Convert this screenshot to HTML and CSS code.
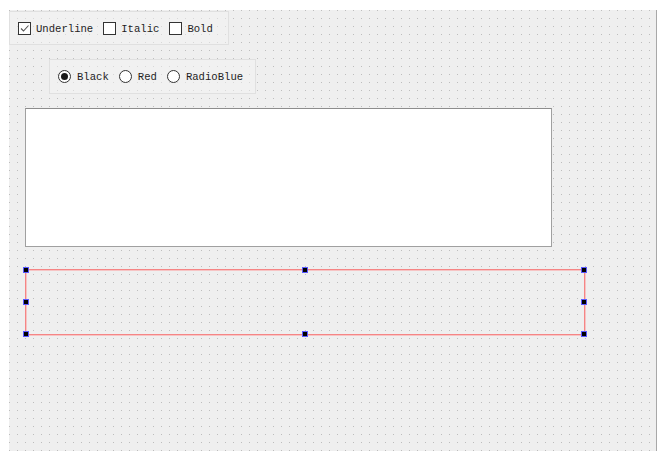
FILE: index.html
```html
<!DOCTYPE html>
<html>
<head>
<meta charset="utf-8">
<link rel="stylesheet" href="styles.css">
</head>
<body>
<div class="canvas">
  <div class="group group-checks">
    <label class="opt"><span class="check checked"><svg viewBox="0 0 11 11" width="11" height="11"><path d="M2 5.5 L4.5 8 L9.5 2.5" fill="none" stroke="#555" stroke-width="1.1"/></svg></span><span class="txt">Underline</span></label>
    <label class="opt"><span class="check"></span><span class="txt">Italic</span></label>
    <label class="opt"><span class="check"></span><span class="txt">Bold</span></label>
  </div>
  <div class="group group-radios">
    <label class="opt"><span class="radio on"></span><span class="txt">Black</span></label>
    <label class="opt"><span class="radio"></span><span class="txt">Red</span></label>
    <label class="opt"><span class="radio"></span><span class="txt">RadioBlue</span></label>
  </div>
  <div class="textbox"></div>
  <div class="selected">
    <span class="handle h-tl"></span>
    <span class="handle h-tm"></span>
    <span class="handle h-tr"></span>
    <span class="handle h-ml"></span>
    <span class="handle h-mr"></span>
    <span class="handle h-bl"></span>
    <span class="handle h-bm"></span>
    <span class="handle h-br"></span>
  </div>
</div>
</body>
</html>
```
FILE: styles.css
```css
html, body {
  margin: 0;
  padding: 0;
  background: #ffffff;
  overflow: hidden;
}
.canvas {
  margin: 10px 0 0 9px;
  width: 648px;
  height: 441px;
  box-sizing: border-box;
  border-right: 1px solid #a8a8a8;
  background-color: #efefef;
  background-image: radial-gradient(circle at 0.5px 0.5px, #bdbdbd 0.8px, transparent 0.95px);
  background-size: 8px 8px;
  background-position: 0 0;
  display: flex;
  flex-direction: column;
  align-items: flex-start;
  font-family: "Liberation Mono", "DejaVu Sans Mono", monospace;
  font-size: 10.6px;
  color: #1e1e1e;
}
.group {
  display: flex;
  align-items: center;
  box-sizing: border-box;
  border: 1px solid #e0e0e0;
  background-color: rgba(244, 244, 244, 0.5);
  padding-left: 8px;
  gap: 10px;
}
.group-checks {
  margin-top: 1px;
  width: 220px;
  height: 34px;
}
.group-radios {
  margin-top: 14px;
  margin-left: 40px;
  width: 207px;
  height: 35px;
}
.opt {
  display: flex;
  align-items: center;
  gap: 5px;
}
.group-radios .opt {
  gap: 6px;
}
.txt {
  line-height: 13px;
  padding-top: 2px;
}
.check {
  width: 13px;
  height: 13px;
  box-sizing: border-box;
  border: 1px solid #333333;
  background: #ffffff;
  display: flex;
  align-items: center;
  justify-content: center;
}
.radio {
  width: 13px;
  height: 13px;
  box-sizing: border-box;
  border: 1px solid #333333;
  border-radius: 50%;
  background: #ffffff;
  display: flex;
  align-items: center;
  justify-content: center;
}
.radio.on::after {
  content: "";
  width: 7px;
  height: 7px;
  border-radius: 50%;
  background: #1a1a1a;
}
.textbox {
  margin-top: 14px;
  margin-left: 16px;
  width: 527px;
  height: 139px;
  box-sizing: border-box;
  background: #ffffff;
  border: 1px solid #a0a0a0;
  border-top-color: #8c8c8c;
}
.selected {
  position: relative;
  margin-top: 22px;
  margin-left: 16px;
  width: 560px;
  height: 66px;
  box-sizing: border-box;
  border: 1px solid #f58585;
  box-shadow: 0 1px 0 0 #f6c4c4, 1px 0 0 0 #f6c4c4, inset 0 1px 0 0 #f6c4c4, inset 1px 0 0 0 #f6c4c4;
}
.handle {
  position: absolute;
  width: 6px;
  height: 6px;
  box-sizing: border-box;
  background: #000000;
  border: 1px solid #5a5aff;
}
.h-tl { left: -3px; top: -3px; }
.h-tm { left: calc(50% - 3px); top: -3px; }
.h-tr { right: -3px; top: -3px; }
.h-ml { left: -3px; top: calc(50% - 3px); }
.h-mr { right: -3px; top: calc(50% - 3px); }
.h-bl { left: -3px; bottom: -3px; }
.h-bm { left: calc(50% - 3px); bottom: -3px; }
.h-br { right: -3px; bottom: -3px; }
```
